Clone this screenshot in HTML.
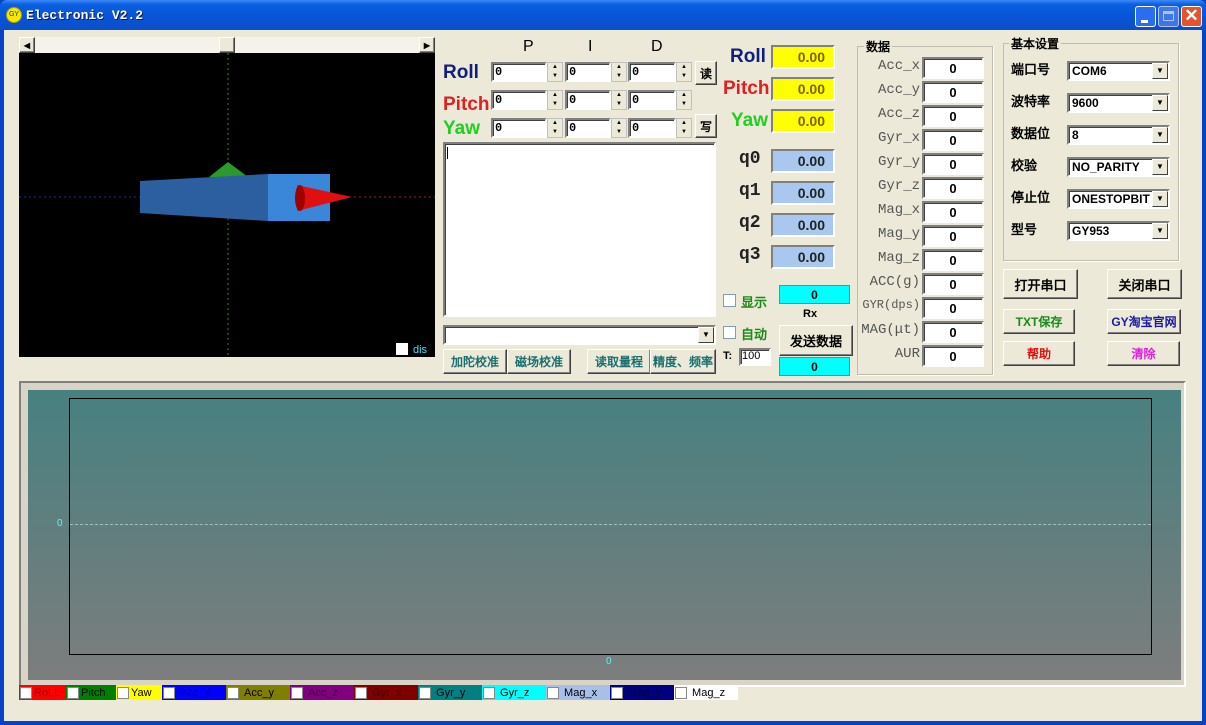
<!DOCTYPE html>
<html><head><meta charset="utf-8"><style>
*{box-sizing:border-box;margin:0;padding:0}
body{width:1206px;height:725px;overflow:hidden;background:#0842c8;font-family:"Liberation Sans","WenQuanYi Zen Hei",sans-serif;position:relative}
.a{position:absolute}
.win{left:4px;top:30px;width:1198px;height:691px;background:#ece9d8}
.tb{left:0;top:0;width:1206px;height:30px;background:linear-gradient(#3d8af7 0%,#0a5fe0 15%,#0853d6 60%,#0a4fc8 100%);border-radius:7px 7px 0 0}
.sunk{background:#fff;border:2px solid;border-color:#808080 #fff #fff #808080;box-shadow:inset 1px 1px 0 #404040}
.btn{background:#ece9d8;border:1px solid;border-color:#fff #404040 #404040 #fff;box-shadow:inset -1px -1px 0 #808080;font-size:12px;font-weight:bold;display:flex;align-items:center;justify-content:center;font-family:"WenQuanYi Zen Hei",sans-serif}
.spin{width:16px;height:20px;background:#ece9d8;border:1px solid #c0c0c0;font-size:6px;line-height:9px;text-align:center;color:#000}
.inp{font-size:12px;padding:1px 2px;font-family:"Liberation Mono",monospace;font-weight:bold}
.lbl{font-size:19px;font-weight:bold}
.val{font-size:14px;font-weight:bold;text-align:right;padding:2px 8px 0 0;font-family:"Liberation Sans",sans-serif;border:2px solid;border-color:#808080 #fff #fff #808080}
.dl{font-family:"Liberation Mono",monospace;font-size:14px;color:#555;width:60px;text-align:right}
.dv{width:62px;height:22px;text-align:center;font-weight:bold;font-size:13px;padding-top:2px}
.cl{font-size:13px;font-weight:bold;font-family:"WenQuanYi Zen Hei",sans-serif}
.cb{width:103px;height:20px;font-size:12px;font-weight:bold;padding:1px 3px;font-family:"Liberation Sans",sans-serif}
.arr{position:absolute;right:0;top:0;width:16px;height:16px;background:#ece9d8;border:1px solid;border-color:#fff #404040 #404040 #fff;font-size:8px;text-align:center;line-height:14px}
.grp{border:1px solid #c0bdb0;box-shadow:1px 1px 0 #fff}
.gt{background:#ece9d8;font-size:12px;font-weight:bold;padding:0 2px;font-family:"WenQuanYi Zen Hei",sans-serif}
.chk{width:13px;height:13px;background:#fff;border:1px solid #7f9db9}
.lg{height:15px;font-size:11px;font-family:"Liberation Sans",sans-serif;display:flex;align-items:center}
.lg i{display:inline-block;width:12px;height:12px;background:#fff;border:1px solid #888;margin:0 2px 0 1px}
</style></head><body>
<div class="a tb"></div>
<div class="a" style="left:6px;top:7px;width:16px;height:16px;border-radius:50%;background:#f4e800;border:1px solid #b0a000;font-size:7px;line-height:14px;text-align:center;color:#333">GY</div>
<div class="a" style="left:26px;top:8px;color:#fff;font-family:'Liberation Mono',monospace;font-weight:bold;font-size:13px;text-shadow:1px 1px #0a1a60">Electronic V2.2</div>
<div class="a" style="left:1135px;top:6px;width:21px;height:21px;background:#2a6df0;border:1px solid #fff;border-radius:3px"><div class="a" style="left:5px;top:13px;width:7px;height:3px;background:#fff"></div></div>
<div class="a" style="left:1158px;top:6px;width:21px;height:21px;background:#4a80f0;border:1px solid #dde;border-radius:3px;opacity:.8"><div class="a" style="left:4px;top:4px;width:11px;height:10px;border:1px solid #dde;border-top-width:3px"></div></div>
<div class="a" style="left:1181px;top:6px;width:21px;height:21px;background:#e0552e;border:1px solid #fff;border-radius:3px;color:#fff;font-size:17px;line-height:18px;text-align:center;font-weight:bold">✕</div>
<div class="a win"></div>

<div class="a" style="left:19px;top:37px;width:416px;height:16px;background:#f4f2ea">
 <div class="a btn" style="left:0;top:0;width:16px;height:16px;font-size:8px">◀</div>
 <div class="a btn" style="left:200px;top:0;width:16px;height:16px"></div>
 <div class="a btn" style="left:400px;top:0;width:16px;height:16px;font-size:8px">▶</div>
</div>
<svg class="a" style="left:19px;top:53px" width="416" height="304">
<rect width="416" height="304" fill="#000"/>
<line x1="209" y1="0" x2="209" y2="304" stroke="#2a8a2a" stroke-dasharray="2,3"/>
<line x1="0" y1="144" x2="170" y2="144" stroke="#2030a0" stroke-dasharray="2,3"/>
<line x1="310" y1="144" x2="416" y2="144" stroke="#a02020" stroke-dasharray="2,3"/>
<polygon points="190,124 209,109 229,124" fill="#2a9a2a"/>
<polygon points="121,128 249,121 249,168 121,160" fill="#2c5fa0"/>
<polygon points="249,121 311,121 311,168 249,168" fill="#3a86d8"/>
<polygon points="278,132 333,144 278,158" fill="#e01010"/>
<ellipse cx="281" cy="145" rx="5" ry="13" fill="#a00000"/>
<rect x="377" y="290" width="12" height="12" fill="#fff"/>
<text x="394" y="300" fill="#40e0ff" font-size="11" font-family="Liberation Sans">dis</text>
</svg>

<div class="a" style="left:523px;top:38px;font-size:16px">P</div>
<div class="a" style="left:588px;top:38px;font-size:16px">I</div>
<div class="a" style="left:651px;top:38px;font-size:16px">D</div>
<div class="a lbl" style="left:443px;top:62px;color:#10207a">Roll</div>
<div class="a lbl" style="left:443px;top:94px;color:#e02020">Pitch</div>
<div class="a lbl" style="left:443px;top:118px;color:#20d020">Yaw</div>
<div id="spins"></div>
<div class="a btn" style="left:695px;top:61px;width:22px;height:24px">读</div>
<div class="a btn" style="left:695px;top:114px;width:22px;height:24px">写</div>
<div class="a sunk" style="left:443px;top:142px;width:273px;height:175px"><div class="a" style="left:2px;top:3px;width:1px;height:12px;background:#000"></div></div>
<div class="a sunk" style="left:443px;top:325px;width:273px;height:20px"><div class="arr">▼</div></div>
<div class="a btn" style="left:443px;top:349px;width:64px;height:25px;color:#1a7070">加陀校准</div>
<div class="a btn" style="left:507px;top:349px;width:64px;height:25px;color:#1a7070">磁场校准</div>
<div class="a btn" style="left:587px;top:349px;width:64px;height:25px;color:#1a7070">读取量程</div>
<div class="a btn" style="left:650px;top:349px;width:66px;height:25px;color:#1a7070">精度、频率</div>

<div class="a lbl" style="left:730px;top:46px;color:#10207a">Roll</div>
<div class="a lbl" style="left:723px;top:78px;color:#e02020">Pitch</div>
<div class="a lbl" style="left:731px;top:110px;color:#20d020">Yaw</div>
<div class="a val" style="left:771px;top:45px;width:64px;height:24px;background:#ffff00;color:#806000">0.00</div>
<div class="a val" style="left:771px;top:77px;width:64px;height:24px;background:#ffff00;color:#806000">0.00</div>
<div class="a val" style="left:771px;top:109px;width:64px;height:24px;background:#ffff00;color:#806000">0.00</div>
<div class="a" style="left:739px;top:149px;font-size:18px;font-weight:bold;font-family:'Liberation Mono',monospace;color:#222">q0</div>
<div class="a" style="left:739px;top:181px;font-size:18px;font-weight:bold;font-family:'Liberation Mono',monospace;color:#222">q1</div>
<div class="a" style="left:739px;top:213px;font-size:18px;font-weight:bold;font-family:'Liberation Mono',monospace;color:#222">q2</div>
<div class="a" style="left:739px;top:245px;font-size:18px;font-weight:bold;font-family:'Liberation Mono',monospace;color:#222">q3</div>
<div class="a val" style="left:771px;top:149px;width:64px;height:24px;background:#a8c8f0;color:#222">0.00</div>
<div class="a val" style="left:771px;top:181px;width:64px;height:24px;background:#a8c8f0;color:#222">0.00</div>
<div class="a val" style="left:771px;top:213px;width:64px;height:24px;background:#a8c8f0;color:#222">0.00</div>
<div class="a val" style="left:771px;top:245px;width:64px;height:24px;background:#a8c8f0;color:#222">0.00</div>
<div class="a chk" style="left:723px;top:294px"></div>
<div class="a cl" style="left:741px;top:292px;color:#1a8a1a">显示</div>
<div class="a" style="left:779px;top:285px;width:71px;height:19px;background:#00ffff;border:1px solid #808080;text-align:center;font-size:12px;font-weight:bold;padding-top:2px">0</div>
<div class="a" style="left:803px;top:308px;font-size:11px;font-weight:bold">Rx</div>
<div class="a chk" style="left:723px;top:326px"></div>
<div class="a cl" style="left:741px;top:324px;color:#1a8a1a">自动</div>
<div class="a btn" style="left:779px;top:325px;width:74px;height:31px;font-size:13px">发送数据</div>
<div class="a" style="left:723px;top:350px;font-size:11px;font-weight:bold">T:</div>
<div class="a sunk" style="left:739px;top:348px;width:32px;height:18px;font-size:11px;padding-left:1px">100</div>
<div class="a" style="left:779px;top:357px;width:71px;height:19px;background:#00ffff;border:1px solid #808080;text-align:center;font-size:12px;font-weight:bold;padding-top:2px">0</div>

<div class="a grp" style="left:857px;top:46px;width:136px;height:329px"></div>
<div class="a gt" style="left:864px;top:38px">数据</div>
<div id="data"></div>

<div class="a grp" style="left:1003px;top:43px;width:176px;height:218px"></div>
<div class="a gt" style="left:1009px;top:35px">基本设置</div>
<div id="set"></div>
<div class="a btn" style="left:1003px;top:269px;width:75px;height:30px;font-size:13px">打开串口</div>
<div class="a btn" style="left:1107px;top:269px;width:75px;height:30px;font-size:13px">关闭串口</div>
<div class="a btn" style="left:1003px;top:309px;width:72px;height:25px;color:#1a8a1a">TXT保存</div>
<div class="a btn" style="left:1107px;top:309px;width:74px;height:25px;color:#1a1aa0">GY淘宝官网</div>
<div class="a btn" style="left:1003px;top:341px;width:72px;height:25px;color:#e01010">帮助</div>
<div class="a btn" style="left:1107px;top:341px;width:73px;height:25px;color:#e020e0">清除</div>

<div class="a" style="left:19px;top:381px;width:1167px;height:306px;border:2px solid;border-color:#808080 #fff #fff #808080;background:#d8d5c8"></div>
<div class="a" style="left:28px;top:390px;width:1153px;height:290px;background:linear-gradient(#478080,#7d7d7d)"></div>
<div class="a" style="left:69px;top:398px;width:1083px;height:257px;border:1px solid #000"></div>
<div class="a" style="left:70px;top:524px;width:1081px;border-top:1px dashed #a0c0c0"></div>
<div class="a" style="left:57px;top:518px;font-size:10px;color:#40ffff">0</div>
<div class="a" style="left:606px;top:656px;font-size:10px;color:#40ffff">0</div>

<div class="a" style="left:19px;top:685px;display:flex">
<div class="lg" style="background:#ff0000;width:47px;color:#800"><i></i>RoLL</div>
<div class="lg" style="background:#008000;width:50px;color:#000"><i></i>Pitch</div>
<div class="lg" style="background:#ffff00;width:46px;color:#000"><i></i>Yaw</div>
<div class="lg" style="background:#0000ff;width:64px;color:#0000a0"><i></i>&nbsp;Acc_x</div>
<div class="lg" style="background:#808000;width:64px;color:#000"><i></i>&nbsp;Acc_y</div>
<div class="lg" style="background:#800080;width:64px;color:#400040"><i></i>&nbsp;Acc_z</div>
<div class="lg" style="background:#800000;width:64px;color:#400000"><i></i>&nbsp;Gyr_x</div>
<div class="lg" style="background:#008080;width:64px;color:#000"><i></i>&nbsp;Gyr_y</div>
<div class="lg" style="background:#00ffff;width:64px;color:#000"><i></i>&nbsp;Gyr_z</div>
<div class="lg" style="background:#a8c0e8;width:64px;color:#000"><i></i>&nbsp;Mag_x</div>
<div class="lg" style="background:#000080;width:64px;color:#000040"><i></i>&nbsp;Mag_y</div>
<div class="lg" style="background:#fff;width:64px;color:#000"><i></i>&nbsp;Mag_z</div>
</div>

<script>
var s='';
[62,90,118].forEach(function(y){
 [[491,56,547],[565,46,611],[628,48,676]].forEach(function(c){
  s+='<div class="a sunk inp" style="left:'+c[0]+'px;top:'+y+'px;width:'+c[1]+'px;height:20px">0</div>';
  s+='<div class="a spin" style="left:'+c[2]+'px;top:'+y+'px">▲<br>▼</div>';
 });
});
document.getElementById('spins').innerHTML=s;
var L=['Acc_x','Acc_y','Acc_z','Gyr_x','Gyr_y','Gyr_z','Mag_x','Mag_y','Mag_z','ACC(g)','GYR(dps)','MAG(μt)','AUR'];
var d='';
L.forEach(function(t,i){var y=57+i*24;
 var fs=t.length>7?'12px':'14px';
 d+='<div class="a dl" style="left:858px;top:'+(y+1)+'px;font-size:'+fs+';width:62px">'+t+'</div>';
 d+='<div class="a sunk dv" style="left:922px;top:'+y+'px">0</div>';
});
document.getElementById('data').innerHTML=d;
var S=[['端口号','COM6'],['波特率','9600'],['数据位','8'],['校验','NO_PARITY'],['停止位','ONESTOPBIT'],['型号','GY953']];
var h='';
S.forEach(function(p,i){var y=61+i*32;
 h+='<div class="a cl" style="left:1011px;top:'+(y-2)+'px">'+p[0]+'</div>';
 h+='<div class="a sunk cb" style="left:1067px;top:'+y+'px">'+p[1]+'<div class="arr">▼</div></div>';
});
document.getElementById('set').innerHTML=h;
</script>
</body></html>
